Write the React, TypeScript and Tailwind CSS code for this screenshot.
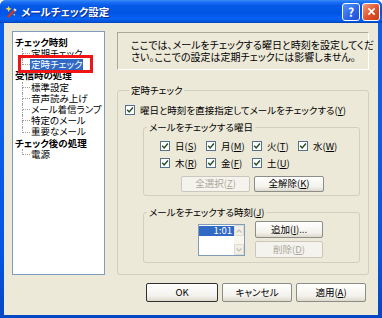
import React from "react";

type Kids = { children?: React.ReactNode };

function Mn({ k }: { k: string }) {
  return (
    <>
      (<span className="underline">{k}</span>)
    </>
  );
}

function Check() {
  return (
    <span className="inline-flex w-[10px] h-[10px] shrink-0 items-center justify-center border border-[#56718c] bg-white">
      <svg viewBox="0 0 8 8" className="w-[8px] h-[8px]">
        <path d="M1.2 3.8 L3.2 5.9 L6.9 1.6" stroke="#244f24" strokeWidth="1.5" fill="none" />
      </svg>
    </span>
  );
}

function Btn({ children, disabled, def, className }: Kids & { disabled?: boolean; def?: boolean; className?: string }) {
  const tone = disabled
    ? "border-[#cbc8bb] text-[#aca899] bg-[#f4f3ee]"
    : def
    ? "border-[#303030] text-black bg-[linear-gradient(to_bottom,#ffffff,#f3f2ec_70%,#dcd8cc)]"
    : "border-[#8b8d86] text-black bg-[linear-gradient(to_bottom,#ffffff,#f3f2ec_70%,#dcd8cc)]";
  return (
    <div className={`flex items-center justify-center rounded-[2px] border leading-none ${tone} ${className ?? ""}`}>
      {children}
    </div>
  );
}

function ScrollArrow({ up }: { up?: boolean }) {
  return (
    <div className="flex h-[11px] w-[10px] items-center justify-center rounded-[1px] border border-[#dedcd0] bg-[#f1efe6]">
      <svg viewBox="0 0 6 4" className="w-[6px] h-[4px]">
        <path d={up ? "M0.5 3.5 L3 1 L5.5 3.5" : "M0.5 0.5 L3 3 L5.5 0.5"} stroke="#c2c0b4" strokeWidth="1.2" fill="none" />
      </svg>
    </div>
  );
}

const tree = [
  { t: "チェック時刻", root: true },
  { t: "定期チェック" },
  { t: "定時チェック", sel: true, last: true },
  { t: "受信時の処理", root: true },
  { t: "標準設定" },
  { t: "音声読み上げ" },
  { t: "メール着信ランプ" },
  { t: "特定のメール" },
  { t: "重要なメール", last: true },
  { t: "チェック後の処理", root: true },
  { t: "電源", last: true },
];

function Tree() {
  return (
    <div className="relative w-[93px] h-[244px] shrink-0 border border-[#7f9db9] bg-white pt-[5px] pl-[2px] leading-none">
      {tree.map((it) =>
        it.root ? (
          <div key={it.t} className="flex h-[11.2px] items-center font-bold whitespace-nowrap">
            {it.t}
          </div>
        ) : (
          <div key={it.t} className="flex h-[11.2px] items-stretch whitespace-nowrap">
            <div className="ml-[7px] flex w-[8px] flex-col">
              <div className="flex-1 border-l border-b border-dotted border-[#a0a0a0]" />
              <div className={`flex-1 ${it.last ? "" : "border-l border-dotted border-[#a0a0a0]"}`} />
            </div>
            <div className="flex items-center">
              <span className={`px-[1px] py-[1px] ${it.sel ? "bg-[#316ac5] text-white" : ""}`}>{it.t}</span>
            </div>
          </div>
        )
      )}
      <div className="absolute left-[5px] top-[23px] h-[18px] w-[75px] border-[3px] border-[#f01414]" />
    </div>
  );
}

const days1 = [
  ["日", "S"],
  ["月", "M"],
  ["火", "T"],
  ["水", "W"],
];
const days2 = [
  ["木", "R"],
  ["金", "F"],
  ["土", "U"],
];

function Day({ d, k }: { d: string; k: string }) {
  return (
    <div className="flex items-center gap-[5px]">
      <Check />
      <span>
        {d}
        <Mn k={k} />
      </span>
    </div>
  );
}

export default function App() {
  return (
    <div className="w-[382px] h-[318px] overflow-hidden bg-white font-['Noto_Sans_CJK_JP',sans-serif] text-[9.5px] text-black [font-feature-settings:'palt']">
      <div className="flex h-full flex-col rounded-t-[6px] bg-[linear-gradient(to_bottom,#0a5fe8,#0c5ee6_40%,#0556e0_80%,#0347c4)]">
        <div className="flex h-[23px] shrink-0 items-center rounded-t-[6px] bg-[linear-gradient(to_bottom,#3d8cf7_0%,#1a6ff5_10%,#0559e6_25%,#0055e5_60%,#0862f5_80%,#0052d8_95%,#0040ab_100%)] pl-[5px] pr-[2px]">
          <svg viewBox="0 0 14 14" className="w-[13px] h-[13px]">
            <path d="M2 12 L9 5 L11 7 L4 14 Z" fill="#c83a2a" />
            <path d="M9 5 L11 7 L12.5 5.5 L10.5 3.5 Z" fill="#e8e8f0" />
            <path d="M4 1 L5 3.5 L7.5 4 L5 5 L4 7.5 L3 5 L0.5 4 L3 3 Z" fill="#ffd640" />
            <path d="M10 9.5 L11 10.5 L10 11.5 L9 10.5 Z" fill="#ffe980" />
          </svg>
          <span className="ml-[3px] text-[10.5px] font-bold text-white [text-shadow:1px_1px_0_#0a2a8a]">メールチェック設定</span>
          <div className="flex-1" />
          <div className="flex h-[18px] w-[18px] items-center justify-center rounded-[3px] border border-white bg-[linear-gradient(135deg,#5b93f9,#2a63e8_60%,#1f4fd0)] text-[12px] font-bold leading-none text-white">
            ?
          </div>
          <div className="ml-[2px] flex h-[18px] w-[18px] items-center justify-center rounded-[3px] border border-white bg-[linear-gradient(135deg,#f29a7c,#e2532b_55%,#c33d18)]">
            <svg viewBox="0 0 10 10" className="w-[9px] h-[9px]">
              <path d="M1.5 1.5 L8.5 8.5 M8.5 1.5 L1.5 8.5" stroke="white" strokeWidth="1.8" />
            </svg>
          </div>
        </div>

        <div className="mx-[4px] mb-[3px] flex flex-1 flex-col bg-[#ece9d8]">
          <div className="flex gap-[12px] pl-[8px] pt-[8px]">
            <Tree />
            <div className="flex w-[252px] flex-col">
              <div className="mt-[1px] h-[38px] border border-[#aca899] border-r-white border-b-white pl-[13px] pt-[6px] text-[10px] leading-[12px] whitespace-nowrap">
                ここでは、メールをチェックする曜日と時刻を設定してくだ
                <br />
                さい。ここでの設定は定期チェックには影響しません。
              </div>

              <fieldset className="mt-[14px] h-[191px] rounded-[3px] border border-[#d0d0bf] px-[7px]">
                <legend className="ml-[4px] px-[2px] leading-[13px]">定時チェック</legend>
                <div className="mt-[7px] flex h-[12px] items-center gap-[5px]">
                  <Check />
                  <span>
                    曜日と時刻を直接指定してメールをチェックする<Mn k="Y" />
                  </span>
                </div>

                <fieldset className="ml-[18px] mr-[1px] mt-[5px] rounded-[3px] border border-[#d0d0bf] pl-[16px] pb-[3px]">
                  <legend className="ml-[-13px] px-[2px] leading-[13px]">メールをチェックする曜日</legend>
                  <div className="mt-[5px] grid h-[12px] grid-cols-[46px_46px_46px_46px] items-center">
                    {days1.map(([d, k]) => (
                      <Day key={d} d={d} k={k} />
                    ))}
                  </div>
                  <div className="mt-[5px] grid h-[12px] grid-cols-[46px_46px_46px_46px] items-center">
                    {days2.map(([d, k]) => (
                      <Day key={d} d={d} k={k} />
                    ))}
                  </div>
                  <div className="ml-[21px] mt-[8px] flex gap-[4px]">
                    <Btn disabled className="h-[16px] w-[69px]">
                      全選択<Mn k="Z" />
                    </Btn>
                    <Btn className="h-[16px] w-[70px]">
                      全解除<Mn k="K" />
                    </Btn>
                  </div>
                </fieldset>

                <fieldset className="ml-[18px] mr-[1px] mt-[10px] rounded-[3px] border border-[#d0d0bf] pl-[54px] pb-[4px]">
                  <legend className="ml-[-51px] px-[2px] leading-[13px]">
                    メールをチェックする時刻<Mn k="J" />
                  </legend>
                  <div className="mt-[2px] flex items-start">
                    <div className="mt-[3px] flex h-[32px] w-[47px] border border-[#7f9db9] bg-white">
                      <div className="flex-1 pt-[1px]">
                        <div className="flex h-[10px] items-center justify-end bg-[#316ac5] pr-[2px] leading-none text-white">1:01</div>
                      </div>
                      <div className="flex w-[10px] flex-col justify-between bg-[#f7f6f1]">
                        <ScrollArrow up />
                        <ScrollArrow />
                      </div>
                    </div>
                    <div className="ml-[10px] flex flex-col gap-[3px]">
                      <Btn className="h-[17px] w-[68px]">
                        追加<Mn k="I" />...
                      </Btn>
                      <Btn disabled className="h-[17px] w-[68px]">
                        削除<Mn k="D" />
                      </Btn>
                    </div>
                  </div>
                </fieldset>
              </fieldset>
            </div>
          </div>

          <div className="mt-[8px] flex justify-end gap-[4px] pr-[12px]">
            <Btn def className="h-[19px] w-[72px]">
              OK
            </Btn>
            <Btn className="h-[19px] w-[70px]">キャンセル</Btn>
            <Btn className="h-[19px] w-[70px]">
              適用<Mn k="A" />
            </Btn>
          </div>
        </div>
      </div>
    </div>
  );
}
